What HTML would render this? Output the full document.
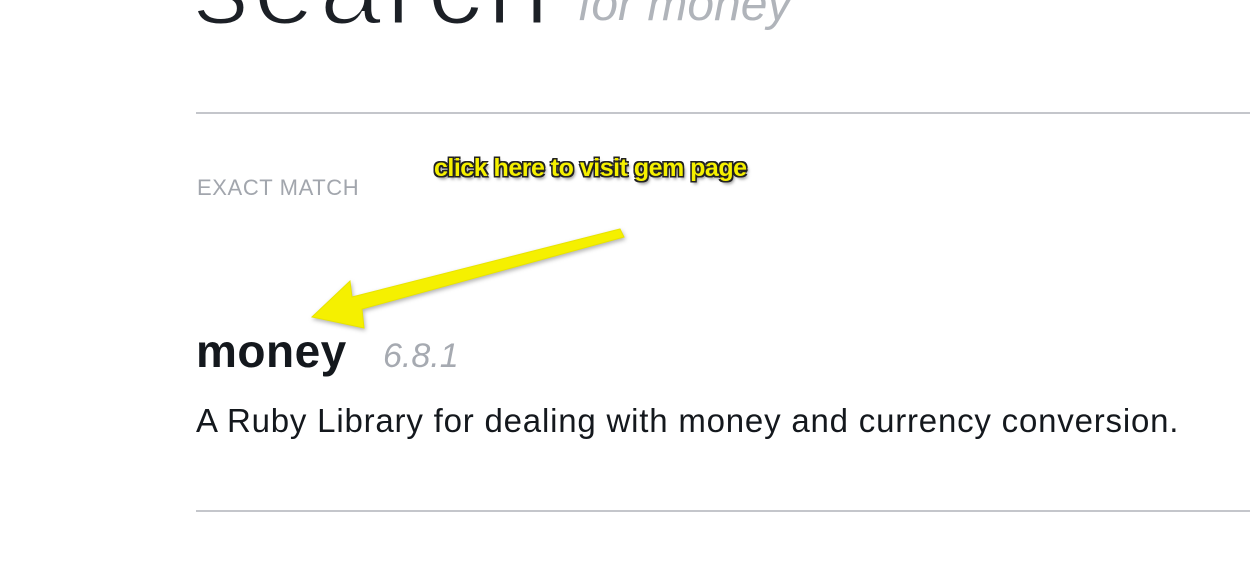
<!DOCTYPE html>
<html><head><style>
body{margin:0;width:1250px;height:578px;background:#fff;overflow:hidden;position:relative;font-family:"Liberation Sans",sans-serif}
.a{position:absolute;white-space:nowrap}
</style></head><body>
<div class="a" style="left:193px;top:-74px;font-size:112px;color:#1c2026;font-weight:300;letter-spacing:4px;line-height:120px;-webkit-text-stroke:3px #fff">search</div>
<div class="a" style="left:578px;top:-20px;font-size:48px;color:#b0b4ba;font-style:italic;line-height:50px">for money</div>
<div class="a" style="left:196px;top:112px;width:1054px;height:2px;background:#c4c6cb"></div>
<div class="a" style="left:197px;top:176px;font-size:22px;color:#a2a6ad;letter-spacing:0.6px;line-height:24px">EXACT MATCH</div>
<div class="a" style="left:434px;top:154px;font-size:25px;font-weight:bold;color:#f5f000;letter-spacing:-0.5px;line-height:28px;text-shadow:-1.5px -1.5px 0 #222,1.5px -1.5px 0 #222,-1.5px 1.5px 0 #222,1.5px 1.5px 0 #222,0 1.5px 0 #222,0 -1.5px 0 #222,2px 3px 3px rgba(0,0,0,.5)">click here to visit gem page</div>
<svg class="a" style="left:0;top:0" width="1250" height="578"><path d="M620,229 L624,237 L362,309 L364,328 L312,317 L350,281 L352,297 Z" fill="#f5f000" stroke="#e8e400" stroke-width="1" style="filter:drop-shadow(1px 2px 2px rgba(0,0,0,.3))"/></svg>
<div class="a" style="left:196px;top:325px;font-size:46px;font-weight:bold;color:#14181d;letter-spacing:0.5px;line-height:52px">money</div>
<div class="a" style="left:383px;top:336px;font-size:34px;font-style:italic;color:#a6aab1;line-height:40px">6.8.1</div>
<div class="a" style="left:196px;top:402px;font-size:33px;color:#14181d;letter-spacing:0.8px;line-height:38px">A Ruby Library for dealing with money and currency conversion.</div>
<div class="a" style="left:196px;top:510px;width:1054px;height:2px;background:#c4c6cb"></div>
</body></html>
